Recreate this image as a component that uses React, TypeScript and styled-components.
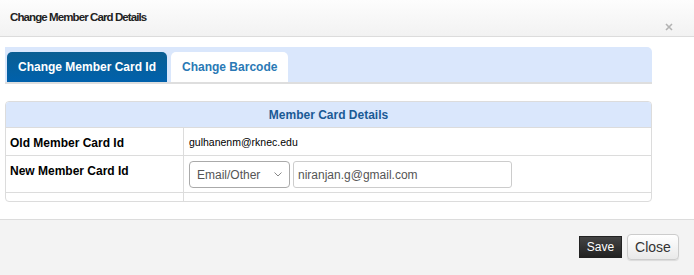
import React from 'react';
import styled, { createGlobalStyle } from 'styled-components';

const GlobalStyle = createGlobalStyle`
	html, body {
		margin: 0;
		padding: 0;
		background: #fff;
	}
	body {
		font-family: Tahoma, "Liberation Sans", Arial, sans-serif;
		font-size: 11px;
		color: #000;
	}
`;

const tabs = ['Change Member Card Id', 'Change Barcode'];

export default function App() {
	return (
		<>
			<GlobalStyle />
			<Modal>
				<Header>
					<Title>Change Member Card Details</Title>
					<CloseX width="8" height="8" viewBox="0 0 8 8">
						<path d="M1 1 L7 7 M7 1 L1 7" stroke="#b3b3b3" strokeWidth="1.6" />
					</CloseX>
				</Header>
				<Body>
					<TabBar>
						{tabs.map((t, i) => (
							<Tab key={t} active={i === 0}>
								{t}
							</Tab>
						))}
					</TabBar>
					<Table>
						<thead>
							<tr>
								<Th colSpan={2}>Member Card Details</Th>
							</tr>
						</thead>
						<tbody>
							<tr>
								<Label>Old Member Card Id</Label>
								<Value>gulhanenm@rknec.edu</Value>
							</tr>
							<tr>
								<Label>New Member Card Id</Label>
								<Value>
									<Controls>
										<SelectBox>
											<span>Email/Other</span>
											<svg width="8" height="5" viewBox="0 0 8 5">
												<path d="M0.5 0.5 L4 4 L7.5 0.5" fill="none" stroke="#888" strokeWidth="1" />
											</svg>
										</SelectBox>
										<TextInput defaultValue="niranjan.g@gmail.com" />
									</Controls>
								</Value>
							</tr>
							<tr>
								<EmptyCell />
								<EmptyCell />
							</tr>
						</tbody>
					</Table>
				</Body>
				<Footer>
					<SaveButton>Save</SaveButton>
					<CloseButton>Close</CloseButton>
				</Footer>
			</Modal>
		</>
	);
}

const Modal = styled.div`
	width: 694px;
	height: 275px;
	display: flex;
	flex-direction: column;
	background: #fff;
`;

const Header = styled.div`
	height: 36px;
	flex-shrink: 0;
	display: flex;
	align-items: flex-start;
	justify-content: space-between;
	padding: 0 21px 0 10px;
	background: linear-gradient(#fdfdfd, #f2f2f2);
	border-bottom: 1px solid #dcdcdc;
`;

const Title = styled.h4`
	margin: 11px 0 0;
	font-family: "Liberation Sans", Arial, sans-serif;
	font-size: 11.5px;
	font-weight: bold;
	letter-spacing: -0.9px;
	color: #222;
`;

const CloseX = styled.svg`
	margin-top: 23px;
`;

const Body = styled.div`
	flex: 1;
	padding: 10px 42px 0 5px;
	display: flex;
	flex-direction: column;
	gap: 17px;
`;

const TabBar = styled.div`
	height: 30px;
	padding: 5px 0 0 2px;
	display: flex;
	gap: 4px;
	align-items: flex-end;
	background: #dae7fc;
	border-top-right-radius: 5px;
	border-bottom: 2px solid #dedede;
`;

const Tab = styled.div<{ active: boolean }>`
	height: 30px;
	padding: 0 11px;
	display: flex;
	align-items: center;
	font-family: "Liberation Sans", Arial, sans-serif;
	font-size: 12px;
	font-weight: bold;
	border-radius: 5px 5px 0 0;
	background: ${({ active }) => (active ? 'linear-gradient(#0a5e92, #0061ac)' : '#fff')};
	color: ${({ active }) => (active ? '#fff' : '#2a79b5')};
`;

const Table = styled.table`
	width: 100%;
	border-collapse: separate;
	border-spacing: 0;
	border: 1px solid #dcdcdc;
	border-radius: 4px;
	overflow: hidden;
	font-family: "Liberation Sans", Arial, sans-serif;
`;

const Th = styled.th`
	height: 26px;
	box-sizing: border-box;
	padding: 0;
	background: #dae7fc;
	color: #1a5a95;
	font-size: 12px;
	font-weight: bold;
	text-align: center;
	border-bottom: 1px solid #dcdcdc;
`;

const Label = styled.td`
	width: 169px;
	height: 18px;
	padding: 8px 4px 0;
	vertical-align: top;
	font-size: 12px;
	font-weight: bold;
	border-right: 1px solid #dcdcdc;
	border-bottom: 1px solid #dcdcdc;
`;

const Value = styled.td`
	height: 18px;
	padding: 5px 4px 4px 5px;
	vertical-align: middle;
	font-size: 10.5px;
	border-bottom: 1px solid #dcdcdc;
`;

const EmptyCell = styled.td`
	height: 8px;
	padding: 0;
	&:first-child {
		border-right: 1px solid #dcdcdc;
	}
`;

const Controls = styled.div`
	display: flex;
	gap: 3px;
`;

const SelectBox = styled.div`
	width: 101px;
	height: 27px;
	box-sizing: border-box;
	display: flex;
	align-items: center;
	justify-content: space-between;
	padding: 0 7px 0 7px;
	border: 1px solid #aaa;
	border-radius: 4px;
	font-size: 12px;
	color: #555;
`;

const TextInput = styled.input`
	width: 219px;
	height: 27px;
	box-sizing: border-box;
	padding: 0 4px;
	border: 1px solid #ccc;
	border-radius: 3px;
	font-family: inherit;
	font-size: 12px;
	color: #555;
	outline: none;
`;

const Footer = styled.div`
	height: 56px;
	flex-shrink: 0;
	display: flex;
	align-items: center;
	justify-content: flex-end;
	gap: 5px;
	padding: 0 15px 2px 0;
	box-sizing: border-box;
	background: #f3f3f3;
	border-top: 1px solid #dcdcdc;
`;

const SaveButton = styled.button`
	height: 22px;
	width: 43px;
	padding: 0;
	border: 1px solid #222;
	background: linear-gradient(#444, #222);
	color: #fff;
	font-family: "Liberation Sans", Arial, sans-serif;
	font-size: 12px;
`;

const CloseButton = styled.button`
	height: 26px;
	width: 52px;
	padding: 0;
	border: 1px solid #ccc;
	border-radius: 4px;
	background: linear-gradient(#fff, #e9e9e9);
	color: #333;
	font-family: "Liberation Sans", Arial, sans-serif;
	font-size: 14px;
	box-shadow: 0 1px 1px rgba(0, 0, 0, 0.1);
`;
